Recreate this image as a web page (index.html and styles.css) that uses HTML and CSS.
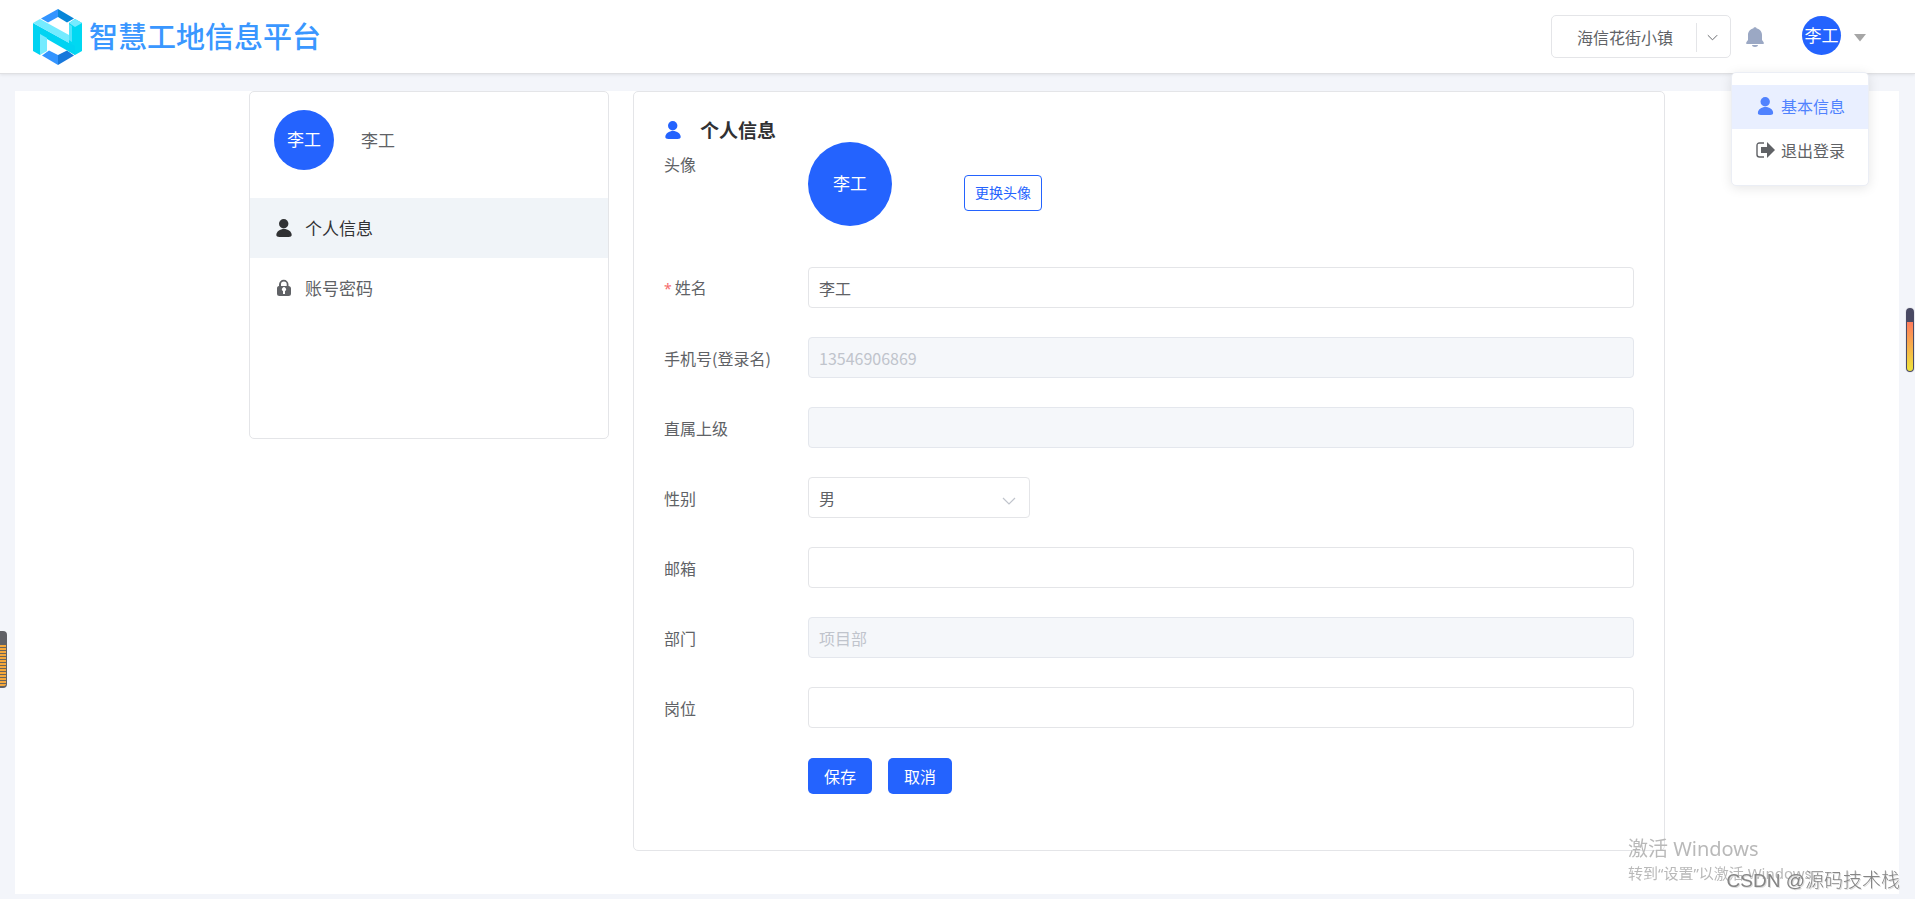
FILE: index.html
```html
<!DOCTYPE html>
<html lang="zh-CN">
<head>
<meta charset="utf-8">
<meta name="viewport" content="width=device-width, initial-scale=1">
<title>智慧工地信息平台</title>
<link rel="stylesheet" href="styles.css">
</head>
<body>
<svg class="sprite" aria-hidden="true">
  <symbol id="user" viewBox="0 0 16 18"><circle cx="7.7" cy="4.8" r="4.7"/><path d="M8 10c-4 0-7.7 2.600-7.700 6 0 1.300 1.200 2 3 2h9.400c1.800 0 3-.7 3-2 0-3.400-3.700-6-7.700-6z"/></symbol>
  <symbol id="chevron" viewBox="0 0 14 8"><path d="M1 1l6 6 6-6" fill="none" stroke="currentColor" stroke-width="1.200"/></symbol>
</svg>

<header class="header">
  <div class="brand">
    <svg class="brand-mark" viewBox="0 0 49 56" aria-hidden="true">
      <path d="M25 0L8 9.500l7 4L25 8z" fill="#3394ff"/>
      <path d="M25 0l16 9.500-7 4L25 8z" fill="#0786d8"/>
      <path d="M25 56L9 46.500l7-5 9 4.500z" fill="#3394ff"/>
      <path d="M25 56l16-9.500-7-5-9 4.500z" fill="#1878db"/>
      <path d="M36 14l6-4 7 4v28l-7 4-6-4z" fill="#00d8f2"/>
      <path d="M36 14l6-4 7 4-7 4z" fill="#75ebff"/>
      <path d="M36 15l3 2v16l-3-2z" fill="#4fe3fa"/>
      <path d="M0 14l42 23v9L14 30 7 46l-7-4z" fill="#00d3f2"/>
      <path d="M7 25l7 4v13l-7 4z" fill="#75ebff"/>
      <path d="M0 14l7-4 29 16v8z" fill="#75ebff"/>
    </svg>
    <span class="brand-name">智慧工地信息平台</span>
  </div>
  <div class="tools">
    <div class="project">
      <select class="project-select" aria-label="项目"><option>海信花街小镇</option></select>
      <span class="project-arrow"><svg class="project-chevron" viewBox="0 0 14 8" aria-hidden="true"><use href="#chevron"/></svg></span>
    </div>
    <button class="bell" type="button" aria-label="消息">
      <svg viewBox="0 0 18 20" aria-hidden="true"><path d="M7.500 1.200C7.500 0 10.500 0 10.500 1.200 14 2 16 4.800 16 8v5l1.700 2.300V17H.3v-1.700L2 13V8c0-3.200 2-6 5.500-6.800zM6 18h6c0 1.200-1.300 2-3 2s-3-.8-3-2z"/></svg>
    </button>
    <button class="account" type="button" aria-expanded="true">
      <span class="avatar avatar-small">李工</span>
      <svg class="caret" viewBox="0 0 12 8" aria-hidden="true"><path d="M0 0h12L6 7.500z"/></svg>
    </button>
    <nav class="menu">
      <a class="menu-item menu-item-active" href="#info"><svg class="icon-user" viewBox="0 0 16 18" aria-hidden="true"><use href="#user"/></svg>基本信息</a>
      <a class="menu-item" href="#logout"><svg class="icon-exit" viewBox="0 0 19 16" aria-hidden="true"><path d="M8 1H3.500Q1 1 1 3.500v9Q1 15 3.500 15H8" fill="none" stroke="currentColor" stroke-width="1.400"/><path d="M5 5h6V0l8 8-8 8v-5H5z"/></svg>退出登录</a>
    </nav>
  </div>
</header>

<main class="page">
  <aside class="side card">
    <div class="side-user"><span class="avatar avatar-medium">李工</span><span class="side-name">李工</span></div>
    <nav class="side-nav">
      <a class="side-link side-link-active" href="#info"><svg class="icon-user" viewBox="0 0 16 18" aria-hidden="true"><use href="#user"/></svg>个人信息</a>
      <a class="side-link" href="#password"><svg class="icon-user" viewBox="0 0 16 18" aria-hidden="true"><path fill-rule="evenodd" d="M3 7V5.500a4.700 4.700 0 019.500 0V7C14 7 15 8 15 9.500v5Q15 17 12.500 17H3.500Q1 17 1 14.500v-5C1 8 1.700 7 3 7zM5 7h5.700V5.300a2.800 2.800 0 00-5.700 0zM7 12v3h2v-3a2 2 0 10-2 0z"/></svg>账号密码</a>
    </nav>
  </aside>

  <section class="profile card" id="info">
    <h1 class="profile-title"><svg class="icon-user" viewBox="0 0 16 18" aria-hidden="true"><use href="#user"/></svg>个人信息</h1>
    <form class="form">
      <div class="row row-avatar">
        <span class="label">头像</span>
        <span class="avatar avatar-large">李工</span>
        <button class="change" type="button">更换头像</button>
      </div>
      <div class="row"><label class="label" for="name"><span class="required">*</span>姓名</label><input class="field" id="name" type="text" value="李工"></div>
      <div class="row"><label class="label" for="phone">手机号(登录名)</label><input class="field" id="phone" type="text" value="13546906869" disabled></div>
      <div class="row"><label class="label" for="leader">直属上级</label><input class="field" id="leader" type="text" disabled></div>
      <div class="row"><label class="label" for="gender">性别</label>
        <div class="select-box"><select class="field" id="gender"><option>男</option><option>女</option></select><svg class="select-chevron" viewBox="0 0 14 8" aria-hidden="true"><use href="#chevron"/></svg></div>
      </div>
      <div class="row"><label class="label" for="email">邮箱</label><input class="field" id="email" type="text"></div>
      <div class="row"><label class="label" for="dept">部门</label><input class="field" id="dept" type="text" value="项目部" disabled></div>
      <div class="row"><label class="label" for="post">岗位</label><input class="field" id="post" type="text"></div>
      <div class="actions"><button class="button" type="submit">保存</button><button class="button" type="reset">取消</button></div>
    </form>
  </section>
</main>

<div class="gauge gauge-left"></div>
<div class="gauge gauge-right"></div>
<div class="activate"><p class="activate-title">激活 Windows</p><p class="activate-text">转到“设置”以激活 Windows。</p></div>
<div class="credit">CSDN @源码技术栈</div>
</body>
</html>
```

FILE: styles.css
```css
* { box-sizing: border-box; }

body {
  margin: 0;
  min-height: 100vh;
  display: flex;
  flex-direction: column;
  background: #f3f5fa;
  color: #606266;
  font: 400 16px/24px "Noto Sans CJK SC", sans-serif;
}

button, input, select { font: inherit; color: inherit; }
button { cursor: pointer; }
a { color: inherit; text-decoration: none; }
svg { display: block; flex: none; fill: currentColor; }
.sprite { position: absolute; width: 0; height: 0; }

.header {
  display: flex;
  justify-content: space-between;
  height: 74px;
  padding: 0 49px 0 33px;
  background: #fff;
  border-bottom: 1px solid #dfe0e3;
  box-shadow: 0 1px 3px rgba(0, 0, 0, .08);
}
.brand { display: flex; align-items: center; gap: 7px; }
.brand-mark { width: 49px; height: 56px; }
.brand-name { padding-bottom: 3px; color: #3a97ff; font-size: 29px; line-height: 40px; font-weight: 500; }

.tools { position: relative; display: flex; align-items: center; }
.project { position: relative; width: 180px; height: 43px; }
.project-select {
  appearance: none;
  width: 100%;
  height: 100%;
  padding: 0 25px;
  background: #fff;
  border: 1px solid #e4e5e8;
  border-radius: 5px;
}
.project-arrow {
  position: absolute;
  top: 8px;
  right: 1px;
  display: flex;
  align-items: center;
  justify-content: center;
  width: 34px;
  height: 29px;
  padding-right: 2px;
  border-left: 1px solid #e4e5e8;
  pointer-events: none;
}
.project-chevron { width: 11px; height: 7px; }

.bell { margin-left: 15px; padding: 0; border: 0; background: none; color: #9ba8c4; }
.bell svg { width: 18px; height: 20px; }
.account {
  display: flex;
  align-items: center;
  gap: 13px;
  margin-left: 38px;
  padding: 0 0 2px;
  border: 0;
  background: none;
}
.caret { width: 12px; height: 8px; margin-top: 5px; color: #a6a6a6; }

.avatar {
  display: flex;
  flex: none;
  align-items: center;
  justify-content: center;
  padding-bottom: 2px;
  border-radius: 50%;
  background: #2463fe;
  color: #fff;
  font-size: 17px;
}
.avatar-small { width: 39px; height: 39px; }
.avatar-medium { width: 60px; height: 60px; }
.avatar-large { width: 84px; height: 84px; }

.menu {
  position: absolute;
  z-index: 2;
  top: 72px;
  right: -3px;
  width: 138px;
  padding: 12px 0;
  background: #fff;
  border: 1px solid #ebeef5;
  border-radius: 5px;
  box-shadow: 0 2px 12px rgba(0, 0, 0, .1);
}
.menu-item { display: flex; align-items: center; gap: 6px; height: 44px; padding: 0 0 2px 24px; }
.menu-item-active { background: #e9efff; color: #5082fe; }
.icon-user { width: 16px; height: 18px; }
.icon-exit { width: 19px; height: 16px; }
.menu .icon-user { width: 19px; }

.page {
  flex: 1;
  display: flex;
  align-items: flex-start;
  justify-content: center;
  gap: 24px;
  margin: 17px 16px 5px 15px;
  background: #fff;
}
.card { background: #fff; border: 1px solid #e4e5e8; border-radius: 5px; }

.side { flex: none; width: 360px; min-height: 348px; }
.side-user { display: flex; align-items: center; gap: 27px; padding: 18px 24px 28px; font-size: 17px; }
.side-link { display: flex; align-items: center; gap: 13px; height: 60px; padding: 0 26px; font-size: 17px; }
.side-link-active { background: #f0f4f8; color: #303133; }

.profile { flex: 0 1 1032px; padding: 26px 30px 56px; }
.profile-title {
  display: flex;
  align-items: center;
  gap: 19px;
  margin: 0;
  padding-left: 1px;
  color: #303133;
  font-size: 19px;
  line-height: 24px;
  font-weight: 700;
}
.profile-title .icon-user { color: #2463fe; }

.form { display: flex; flex-direction: column; gap: 29px; }
.row { display: flex; align-items: center; }
.row-avatar { height: 96px; align-items: flex-start; }
.label { flex: none; width: 144px; }
.row-avatar .label { padding-top: 10px; }
.required { margin-right: 3px; color: #f56c6c; font-family: "Noto Sans", sans-serif; font-size: 14px; }
.field {
  appearance: none;
  flex: 1;
  width: 100%;
  min-width: 0;
  height: 41px;
  padding: 0 10px;
  background: #fff;
  border: 1px solid #e4e5e8;
  border-radius: 4px;
}
.field:disabled { background: #f5f7fa; border-color: #e4e7ed; color: #c0c4cc; opacity: 1; }
.select-box { position: relative; width: 222px; }
.select-box .field { display: block; }
.select-chevron { position: absolute; top: 20px; right: 14px; width: 14px; height: 8px; color: #c0c4cc; pointer-events: none; }

.change {
  height: 36px;
  margin: 33px 0 0 72px;
  padding: 0 10px 2px;
  border: 1px solid #2463fe;
  border-radius: 4px;
  background: #fff;
  color: #2463fe;
  font-size: 14px;
}
.actions { display: flex; gap: 16px; padding: 1px 0 0 144px; }
.button {
  height: 36px;
  padding: 0 16px;
  border: 0;
  border-radius: 5px;
  background: #2463fe;
  color: #fff;
}

.gauge { position: fixed; }
.gauge-left {
  top: 631px;
  left: 0;
  width: 7px;
  height: 57px;
  border: solid #606166;
  border-width: 14px 1px 2px 0;
  border-radius: 0 4px 4px 0;
  background: repeating-linear-gradient(#f5a83c 0 2px, #6b655c 2px 3px);
}
.gauge-right {
  top: 308px;
  right: 1px;
  width: 8px;
  height: 64px;
  border: solid #494963;
  border-width: 14px 1px 1px;
  border-radius: 4px;
  background: linear-gradient(#ff7b5c, #efe43a);
  box-shadow: 0 0 0 1px #e8e9ee;
}

.activate {
  position: fixed;
  right: 84px;
  bottom: 16px;
  width: 203px;
  color: #b9b9b9;
  font-family: "Noto Sans", "Noto Sans CJK SC", sans-serif;
  white-space: nowrap;
}
.activate p { margin: 0; }
.activate-title { font-size: 20px; line-height: 28px; }
.activate-text { font-size: 15px; line-height: 20px; }
.credit {
  position: fixed;
  right: 15px;
  bottom: 4px;
  color: #858585;
  font-family: "Liberation Sans", "Noto Sans CJK SC", sans-serif;
  font-size: 19px;
  font-weight: 300;
  line-height: 28px;
  text-shadow: 1px 1px #ddd;
}
```
